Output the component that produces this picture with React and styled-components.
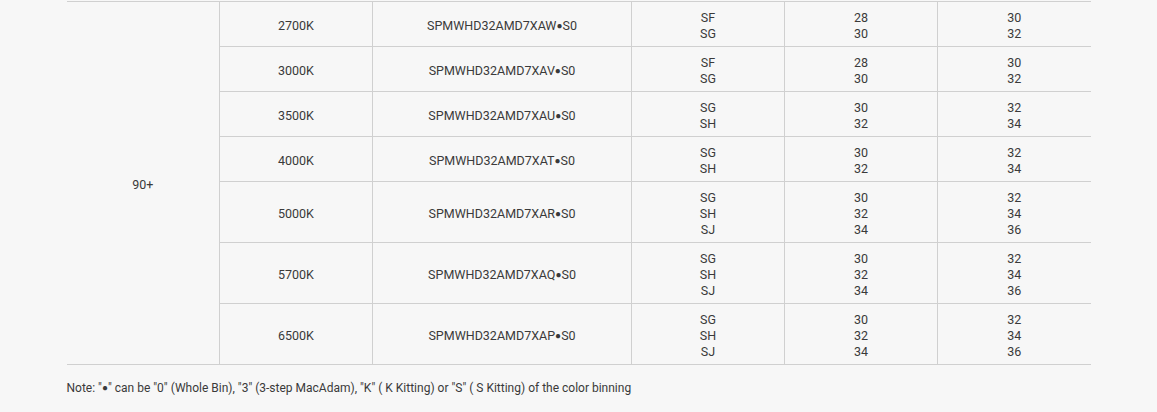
import React from 'react'
import styled, { createGlobalStyle } from 'styled-components'

const GlobalStyle = createGlobalStyle`
  html, body {
    margin: 0;
    padding: 0;
    background: #f7f7f7;
  }
  body {
    font-family: "Roboto", "Liberation Sans", sans-serif;
    color: #3a3a3a;
  }
`

const rows = [
  { cct: '2700K', code: 'AW', bins: [['SF', 28, 30], ['SG', 30, 32]] },
  { cct: '3000K', code: 'AV', bins: [['SF', 28, 30], ['SG', 30, 32]] },
  { cct: '3500K', code: 'AU', bins: [['SG', 30, 32], ['SH', 32, 34]] },
  { cct: '4000K', code: 'AT', bins: [['SG', 30, 32], ['SH', 32, 34]] },
  { cct: '5000K', code: 'AR', bins: [['SG', 30, 32], ['SH', 32, 34], ['SJ', 34, 36]] },
  { cct: '5700K', code: 'AQ', bins: [['SG', 30, 32], ['SH', 32, 34], ['SJ', 34, 36]] },
  { cct: '6500K', code: 'AP', bins: [['SG', 30, 32], ['SH', 32, 34], ['SJ', 34, 36]] }
]

const Section = styled.section`
  width: 1024px;
  margin: 0 auto;
  padding-top: 1px;
`

const Table = styled.table`
  width: 1024px;
  table-layout: fixed;
  border-collapse: collapse;
  border-top: 1px solid #d0d0d0;
  font-size: 12.5px;
  line-height: 16px;
`

const Cell = styled.td`
  padding: 8px 4px 4px;
  text-align: center;
  vertical-align: middle;
  border-bottom: 1px solid #d0d0d0;
  border-left: ${({ $first }) => ($first ? 'none' : '1px solid #d0d0d0')};
`

const Lines = styled.div`
  display: flex;
  flex-direction: column;
  align-items: center;
`

const Dot = styled.span`
  font-size: 10px;
  vertical-align: 1px;
`

const Note = styled.p`
  margin: 15px 0 0;
  font-size: 12px;
  line-height: 16px;
`

const Stack = ({ values }) => (
  <Lines>
    {values.map((v, i) => <span key={i}>{v}</span>)}
  </Lines>
)

export default function App () {
  return (
    <>
      <GlobalStyle />
      <Section>
        <Table>
          <colgroup>
            <col style={{ width: 153 }} />
            <col style={{ width: 153 }} />
            <col style={{ width: 259 }} />
            <col style={{ width: 153 }} />
            <col style={{ width: 153 }} />
            <col style={{ width: 153 }} />
          </colgroup>
          <tbody>
            {rows.map((r, i) => (
              <tr key={r.cct}>
                {i === 0 && <Cell $first rowSpan={rows.length}>90+</Cell>}
                <Cell>{r.cct}</Cell>
                <Cell>SPMWHD32AMD7X{r.code}<Dot>●</Dot>S0</Cell>
                <Cell><Stack values={r.bins.map(b => b[0])} /></Cell>
                <Cell><Stack values={r.bins.map(b => b[1])} /></Cell>
                <Cell><Stack values={r.bins.map(b => b[2])} /></Cell>
              </tr>
            ))}
          </tbody>
        </Table>
        <Note>
          Note: "<Dot>●</Dot>" can be "0" (Whole Bin), "3" (3-step MacAdam), "K" ( K Kitting) or "S" ( S Kitting) of the color binning
        </Note>
      </Section>
    </>
  )
}
